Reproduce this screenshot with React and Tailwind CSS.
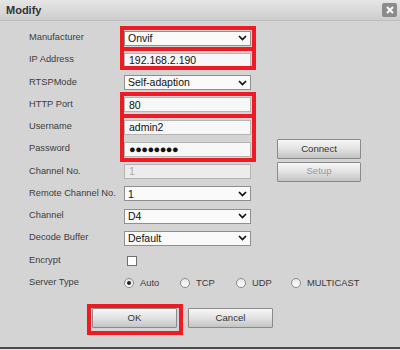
const Chevron = () => (
  <svg className="absolute right-[3px] top-1/2 -translate-y-1/2 w-[9px] h-[6px]" viewBox="0 0 9 6" fill="none">
    <polyline points="1,1 4.5,4.5 8,1" stroke="#111" strokeWidth="1.7" />
  </svg>
);

const Select = ({ value }) => (
  <div className="relative w-[127px] h-[15px] bg-[#fafafa] border border-[#8f8f8f] flex items-center pl-[3px] text-[10.5px] text-[#111] leading-none">
    {value}
    <Chevron />
  </div>
);

const Input = ({ value, disabled, password }) => (
  <div
    className={`w-[127px] h-[15px] border border-[#b4b4b4] flex items-center pl-[4px] leading-none ${
      disabled ? 'bg-[#ececec] text-[#a8a8a8] text-[10.5px]' : 'bg-[#f7f7f7] text-[#111] text-[10.5px]'
    }`}
  >
    {password ? <span className="tracking-[-0.5px] text-[11px]">●●●●●●●●</span> : value}
  </div>
);

const Button = ({ label, muted, width = 'w-[84px]' }) => (
  <div
    className={`${width} h-[20px] flex items-center justify-center border border-[#8a8a8a] rounded-[1px] bg-gradient-to-b from-[#f7f7f7] via-[#e2e2e2] to-[#c4c4c4] text-[9.6px] ${
      muted ? 'text-[#9a9a9a]' : 'text-[#333]'
    }`}
  >
    {label}
  </div>
);

const Radio = ({ checked, label, width = 'w-[56px]' }) => (
  <div className={`${width} flex items-center gap-[6px]`}>
    <div className="shrink-0 w-[10px] h-[10px] rounded-full border border-[#8a8a8a] bg-gradient-to-b from-[#e6e6e6] to-[#ffffff] flex items-center justify-center">
      {checked && <div className="w-[4px] h-[4px] rounded-full bg-[#222]" />}
    </div>
    <span className="text-[9.4px] text-[#3a3a3a] whitespace-nowrap">{label}</span>
  </div>
);

const Row = ({ label, children, extra }) => (
  <div className="flex items-center h-[22.25px]">
    <div className="w-[95px] text-[9.3px] text-[#3c3c3c] whitespace-nowrap">{label}</div>
    {children}
    {extra}
  </div>
);

const RedBox = ({ className }) => (
  <div className={`absolute border-4 border-[#ed1c24] pointer-events-none ${className}`} />
);

export default function App() {
  return (
    <div
      className="relative w-[400px] h-[350px] overflow-hidden bg-[#d4d4d4]"
      style={{ fontFamily: '"Liberation Sans", Arial, sans-serif' }}
    >
      {/* Title bar */}
      <div className="h-[21px] flex items-center justify-between pl-[6px] pr-[3px] bg-gradient-to-b from-[#e6e6e6] to-[#cdcdcd] border-b border-[#bcbcbc]">
        <span className="text-[11px] font-bold text-[#333]">Modify</span>
        <div className="w-[15px] h-[14px] rounded-[2px] bg-[#8b8b8b] flex items-center justify-center">
          <svg className="w-[8px] h-[8px]" viewBox="0 0 8 8">
            <path d="M1 1L7 7M7 1L1 7" stroke="#fff" strokeWidth="2" />
          </svg>
        </div>
      </div>

      {/* Form */}
      <div className="pl-[29px] pt-[6px]">
        <Row label="Manufacturer"><Select value="Onvif" /></Row>
        <Row label="IP Address"><Input value="192.168.2.190" /></Row>
        <Row label="RTSPMode"><Select value="Self-adaption" /></Row>
        <Row label="HTTP Port"><Input value="80" /></Row>
        <Row label="Username"><Input value="admin2" /></Row>
        <Row label="Password" extra={<div className="ml-[26px]"><Button label="Connect" /></div>}>
          <Input password />
        </Row>
        <Row label="Channel No." extra={<div className="ml-[26px]"><Button label="Setup" muted /></div>}>
          <Input value="1" disabled />
        </Row>
        <Row label="Remote Channel No."><Select value="1" /></Row>
        <Row label="Channel"><Select value="D4" /></Row>
        <Row label="Decode Buffer"><Select value="Default" /></Row>
        <Row label="Encrypt">
          <div className="ml-[3px] w-[10px] h-[10px] bg-white border border-[#6f6f6f]" />
        </Row>
        <Row label="Server Type">
          <div className="flex">
            <Radio checked label="Auto" />
            <Radio label="TCP" />
            <Radio label="UDP" width="w-[55px]" />
            <Radio label="MULTICAST" width="w-auto" />
          </div>
        </Row>
      </div>

      <div className="flex gap-[11px] pl-[92px] mt-[14px]">
        <Button label="OK" width="w-[85px]" />
        <Button label="Cancel" width="w-[85px]" />
      </div>

      {/* Bottom edge of page behind */}
      <div className="absolute left-0 right-0 bottom-0 h-[3px] bg-[#e2e2e2] border-t-2 border-[#4a4a4a]" />

      {/* Annotation boxes */}
      <RedBox className="left-[120px] top-[26px] w-[136px] h-[25px]" />
      <RedBox className="left-[120px] top-[47px] w-[136px] h-[23px]" />
      <RedBox className="left-[120px] top-[92px] w-[136px] h-[26px]" />
      <RedBox className="left-[120px] top-[114px] w-[136px] h-[48px]" />
      <RedBox className="left-[87px] top-[304px] w-[96px] h-[31px]" />
    </div>
  );
}
